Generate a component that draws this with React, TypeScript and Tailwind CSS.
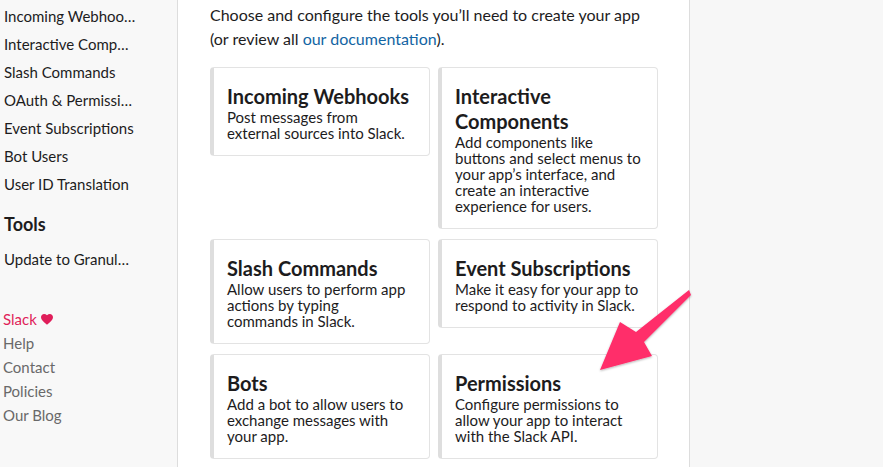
import React from "react";

const navItems = [
  "Incoming Webhoo…",
  "Interactive Comp…",
  "Slash Commands",
  "OAuth & Permissi…",
  "Event Subscriptions",
  "Bot Users",
  "User ID Translation",
];

const footerLinks = ["Help", "Contact", "Policies", "Our Blog"];

// body lines are broken the way the original card width wraps them
const rows = [
  [
    { title: "Incoming Webhooks", body: ["Post messages from", "external sources into Slack."] },
    {
      title: "Interactive Components",
      body: ["Add components like", "buttons and select menus to", "your app’s interface, and", "create an interactive", "experience for users."],
    },
  ],
  [
    { title: "Slash Commands", body: ["Allow users to perform app", "actions by typing", "commands in Slack."] },
    { title: "Event Subscriptions", body: ["Make it easy for your app to", "respond to activity in Slack."] },
  ],
  [
    { title: "Bots", body: ["Add a bot to allow users to", "exchange messages with", "your app."] },
    { title: "Permissions", body: ["Configure permissions to", "allow your app to interact", "with the Slack API."] },
  ],
];

function FeatureCard({ title, body }: { title: string; body: string[] }) {
  return (
    <div className="w-[220px] rounded border border-[#e3e3e3] border-l-4 border-l-[#dedede] bg-white pl-[13px] pr-3 pt-4 pb-[14px]">
      <h3 className="text-[20px] font-bold leading-[25px] text-[#1d1c1d]">{title}</h3>
      <p className="text-[15px] leading-4 text-[#1d1c1d]">
        {body.map((line, i) => (
          <React.Fragment key={line}>
            {i > 0 && <br />}
            {line}
          </React.Fragment>
        ))}
      </p>
    </div>
  );
}

function Arrow() {
  return (
    <svg
      className="pointer-events-none absolute left-0 top-0"
      width="883"
      height="467"
      viewBox="0 0 883 467"
    >
      <defs>
        <filter id="shadow" x="-20%" y="-20%" width="140%" height="140%">
          <feDropShadow dx="0" dy="1" stdDeviation="1.2" floodColor="#000" floodOpacity="0.3" />
        </filter>
      </defs>
      <polygon
        points="689,290 691,295 644,342 652,356 600,370 620,322 636,332"
        fill="#ff2d6b"
        filter="url(#shadow)"
      />
    </svg>
  );
}

export default function App() {
  return (
    <div className="relative flex h-[467px] w-[883px] overflow-hidden bg-[#f7f7f7] font-['Lato',sans-serif]">
      {/* sidebar */}
      <aside className="flex w-[178px] shrink-0 flex-col border-r border-[#dddddd] bg-[#f8f8f8] pl-1 pt-[2px]">
        <ul>
          {navItems.map((item) => (
            <li key={item} className="text-[15px] leading-7 text-[#1d1c1d]">
              {item}
            </li>
          ))}
        </ul>
        <h2 className="mt-[14px] text-[18px] font-bold leading-6 text-[#1d1c1d]">Tools</h2>
        <div className="mt-[9px] text-[15px] leading-7 text-[#1d1c1d]">Update to Granul…</div>
        <ul className="mt-[34px] -ml-px">
          <li className="flex items-center gap-1 text-[15px] leading-6 text-[#e01e5a]">
            Slack
            <svg width="12" height="11" viewBox="0 0 24 22" fill="#e01e5a">
              <path d="M12 21.5 10.3 20C4.2 14.5 0 10.8 0 6.3 0 2.7 2.8 0 6.3 0c2 0 4 .9 5.7 2.5C13.7.9 15.7 0 17.7 0 21.2 0 24 2.7 24 6.3c0 4.5-4.2 8.2-10.3 13.7Z" />
            </svg>
          </li>
          {footerLinks.map((l) => (
            <li key={l} className="text-[15px] leading-6 text-[#696969]">
              {l}
            </li>
          ))}
        </ul>
      </aside>

      {/* main */}
      <main className="w-[512px] shrink-0 border-r border-[#dddddd] bg-white pl-8 pt-[3px]">
        <p className="w-[450px] text-[16px] leading-6 text-[#1d1c1d]">
          Choose and configure the tools you’ll need to create your app
          <br />
          (or review all <a className="text-[#1264a3]">our documentation</a>).
        </p>
        <div className="mt-[16px] flex flex-col gap-[10px]">
          {rows.map((row, i) => (
            <div key={i} className="flex items-start gap-2">
              {row.map((c) => (
                <FeatureCard key={c.title} title={c.title} body={c.body} />
              ))}
            </div>
          ))}
        </div>
      </main>

      <div className="flex-1" />
      <Arrow />
    </div>
  );
}
